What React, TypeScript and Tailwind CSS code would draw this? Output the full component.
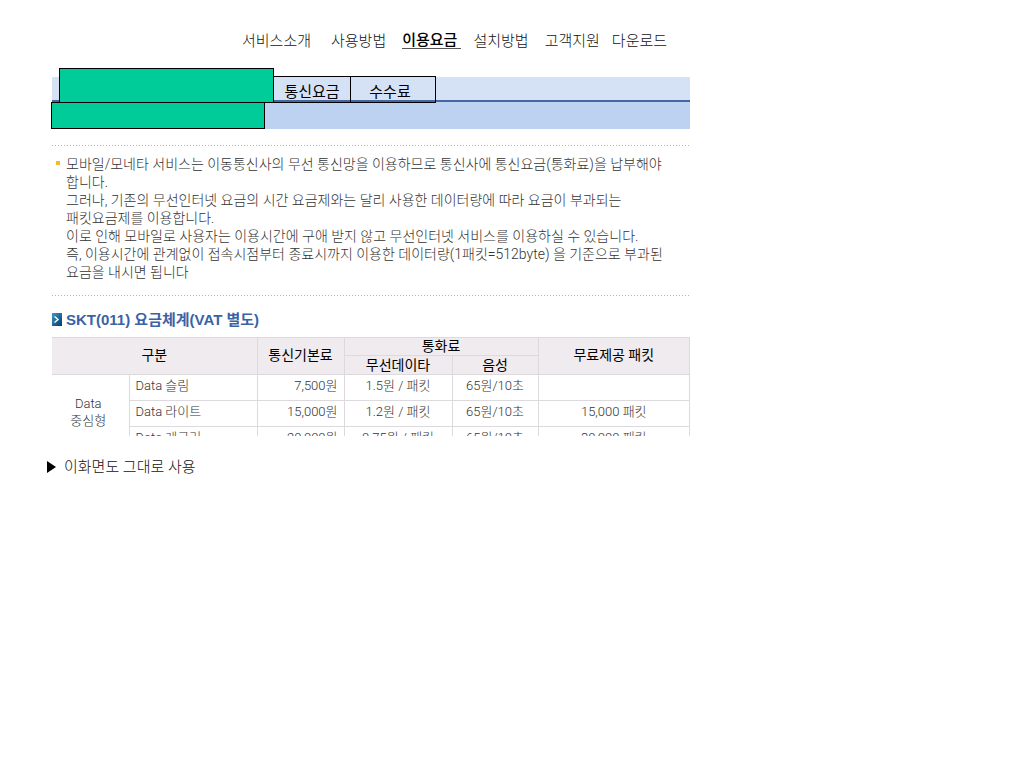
import clsx from 'clsx';

interface NavItem {
  label: string;
  spacing: string;
  active?: boolean;
}

interface Plan {
  name: string;
  baseFee: string;
  dataFee: string;
  voiceFee: string;
  freePackets: string;
}

const navItems: NavItem[] = [
  { label: '서비스소개', spacing: 'mr-5' },
  { label: '사용방법', spacing: 'mr-4' },
  { label: '이용요금', spacing: 'mr-3', active: true },
  { label: '설치방법', spacing: 'mr-4' },
  { label: '고객지원', spacing: 'mr-3' },
  { label: '다운로드', spacing: '' },
];

const notice = [
  '모바일/모네타 서비스는 이동통신사의 무선 통신망을 이용하므로 통신사에 통신요금(통화료)을 납부해야',
  '합니다.',
  '그러나, 기존의 무선인터넷 요금의 시간 요금제와는 달리 사용한 데이터량에 따라 요금이 부과되는',
  '패킷요금제를 이용합니다.',
  '이로 인해 모바일로 사용자는 이용시간에 구애 받지 않고 무선인터넷 서비스를 이용하실 수 있습니다.',
  '즉, 이용시간에 관계없이 접속시점부터 종료시까지 이용한 데이터량(1패킷=512byte) 을 기준으로 부과된',
  '요금을 내시면 됩니다',
];

const plans: Plan[] = [
  { name: 'Data 슬림', baseFee: '7,500원', dataFee: '1.5원 / 패킷', voiceFee: '65원/10초', freePackets: '' },
  { name: 'Data 라이트', baseFee: '15,000원', dataFee: '1.2원 / 패킷', voiceFee: '65원/10초', freePackets: '15,000 패킷' },
  { name: 'Data 레귤러', baseFee: '20,000원', dataFee: '0.75원 / 패킷', voiceFee: '65원/10초', freePackets: '30,000 패킷' },
];

const Dots = () => (
  <svg className="block h-px w-full" aria-hidden="true">
    <line x1="0" y1="0.5" x2="100%" y2="0.5" stroke="#b4b4b4" strokeDasharray="1 2" />
  </svg>
);

const SectionIcon = () => (
  <svg width="10" height="13" viewBox="0 0 10 13" aria-hidden="true">
    <defs>
      <linearGradient id="section-icon" x1="0" y1="0" x2="1" y2="1">
        <stop offset="0" stopColor="#3c9cc8" />
        <stop offset="1" stopColor="#07386c" />
      </linearGradient>
    </defs>
    <rect width="10" height="13" fill="url(#section-icon)" />
    <path d="M2.5 3.5 6 6.5 2.5 9.5" fill="none" stroke="#fff" strokeWidth="1.4" />
  </svg>
);

const Header = () => (
  <nav className="flex items-start pl-[190px] text-[15px] leading-5 text-[#111]">
    {navItems.map((item) => (
      <a
        key={item.label}
        href="#"
        className={clsx(
          'whitespace-nowrap',
          item.spacing,
          item.active && 'mt-0.5 border-b border-[#555] pr-1 leading-[15px] font-medium text-black'
        )}
      >
        {item.label}
      </a>
    ))}
  </nav>
);

const TabBar = () => (
  <div className="bg-linear-to-b from-[#d5e2f6] from-[23px] to-[#bdd2f0] to-[23px]">
    <div className="flex h-[25px] items-end border-b-2 border-[#45669f]">
      <div className="relative -mb-[3px] ml-[7px] h-[35px] w-[215px] shrink-0 border border-black bg-[#00cc99]" />
      <button className="relative -mb-[3px] -ml-px h-[27px] w-[78px] border border-black pt-1 text-[15px] leading-5 font-normal text-black">
        통신요금
      </button>
      <button className="relative -mb-[3px] -ml-px h-[27px] w-[86px] border border-black pt-1 pr-1.5 text-[15px] leading-5 font-normal text-black">
        수수료
      </button>
    </div>
    <div className="relative -ml-px h-[27px] w-[214px] border border-black bg-[#00cc99]" />
  </div>
);

const Notice = () => (
  <div className="mt-4">
    <Dots />
    <div className="flex pt-[9px] pb-[14px] text-sm leading-[18px] text-[#333]">
      <span className="mt-1.5 mr-1.5 ml-1 size-1 shrink-0 bg-[#f5b82e]" />
      <p>
        {notice.map((line) => (
          <span key={line} className="block whitespace-nowrap">
            {line}
          </span>
        ))}
      </p>
    </div>
    <Dots />
  </div>
);

const PriceTable = () => (
  <div className="h-[99px] overflow-hidden">
    <table className="w-full table-fixed border-collapse text-[13px] leading-[17px] whitespace-nowrap text-[#333]">
      <colgroup>
        <col className="w-[77px]" />
        <col className="w-[128px]" />
        <col className="w-[87px]" />
        <col className="w-[108px]" />
        <col className="w-[86px]" />
        <col />
      </colgroup>
      <thead className="bg-[#efebee] text-sm leading-[17px] text-black">
        <tr className="h-[18px]">
          <th colSpan={2} rowSpan={2} className="border border-l-0 border-[#dcdadc] pb-0.5 font-normal">구분</th>
          <th rowSpan={2} className="border border-[#dcdadc] pb-0.5 font-normal">통신기본료</th>
          <th colSpan={2} className="border border-[#dcdadc] font-normal">통화료</th>
          <th rowSpan={2} className="border border-[#dcdadc] pb-0.5 font-normal">무료제공 패킷</th>
        </tr>
        <tr className="h-[19px]">
          <th className="border border-[#dcdadc] font-normal">무선데이타</th>
          <th className="border border-[#dcdadc] font-normal">음성</th>
        </tr>
      </thead>
      <tbody className="[&_td]:border [&_td]:border-[#dcdadc] [&_td]:pt-[2px] [&_td]:align-top">
        {plans.map((plan, index) => (
          <tr key={plan.name} className="h-[26px]">
            {index === 0 && (
              <th rowSpan={plans.length} className="border border-l-0 border-[#dcdadc] pr-1 pb-1 font-light">
                Data
                <br />
                중심형
              </th>
            )}
            <td className="pl-1.5">{plan.name}</td>
            <td className="pr-1.5 text-right">{plan.baseFee}</td>
            <td className="text-center">{plan.dataFee}</td>
            <td className="text-center">{plan.voiceFee}</td>
            <td className="text-center">{plan.freePackets}</td>
          </tr>
        ))}
      </tbody>
    </table>
  </div>
);

export default function App() {
  return (
    <div className="min-h-screen bg-white pt-[31px] pr-4 pl-[52px] font-['Roboto','Noto_Sans_CJK_KR',sans-serif] font-light">
      <main className="w-full max-w-[638px]">
        <Header />
        <div className="mt-[26px]">
          <TabBar />
        </div>
        <Notice />
        <h2 className="mt-[14px] mb-2 flex items-center gap-1 font-['Liberation_Sans','Noto_Sans_CJK_KR',sans-serif] text-[15px] leading-[19px] font-bold text-[#3a63a6]">
          <SectionIcon />
          SKT(011) 요금체계(VAT 별도)
        </h2>
        <PriceTable />
      </main>
      <p className="mt-[21px] -ml-[5px] flex items-center gap-2 text-[15px] leading-5 text-[#111]">
        <svg width="9" height="12" viewBox="0 0 9 12" aria-hidden="true">
          <path d="M0 0 9 6 0 12Z" fill="#000" />
        </svg>
        이화면도 그대로 사용
      </p>
    </div>
  );
}
